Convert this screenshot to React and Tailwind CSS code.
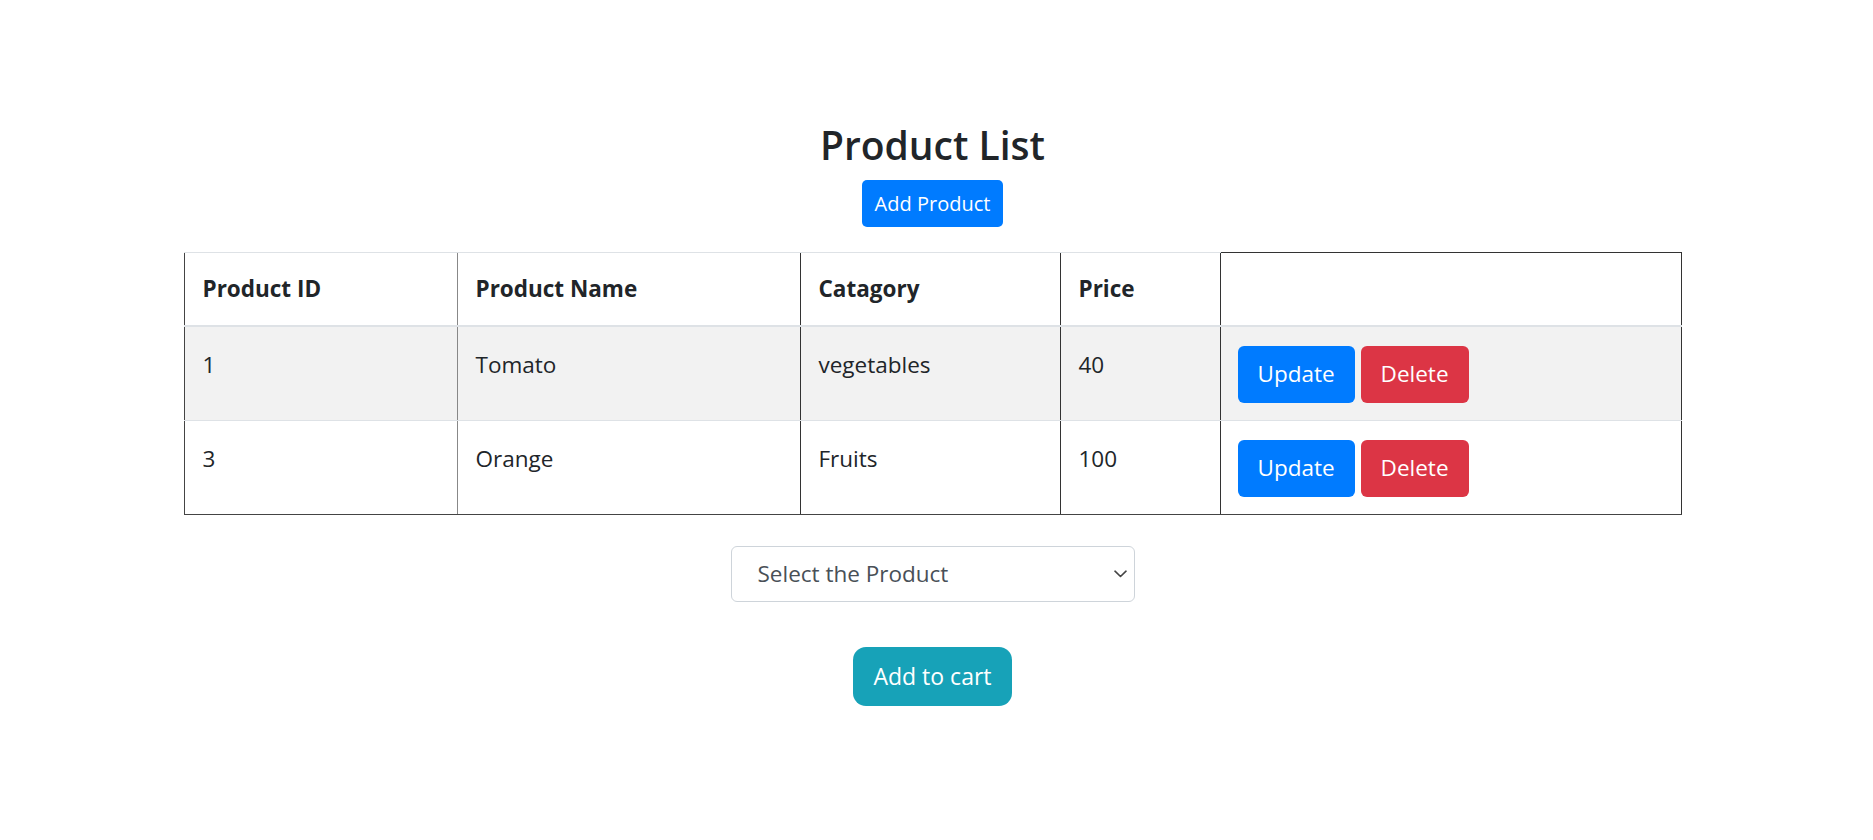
import React from 'react';

const products = [
    { id: 1, name: 'Tomato', category: 'vegetables', price: 40 },
    { id: 3, name: 'Orange', category: 'Fruits', price: 100 },
];

const ProductList = () => {
    return (
        <div className="min-h-screen bg-white text-[#212529] font-['Open_Sans','Liberation_Sans',sans-serif]">
            <div className="w-[1497px] ml-[184px] pt-[121px] flex flex-col items-center">
                <h2 className="text-[39px] leading-[48px] font-semibold">Product List</h2>
                <button className="mt-[11px] h-[47px] px-[13px] rounded-[5px] bg-[#007bff] text-white text-[20px] leading-[30px]">
                    Add Product
                </button>

                <table className="mt-[25px] w-[1497px] table-fixed border-collapse text-[22.5px]">
                    <colgroup>
                        <col className="w-[273px]" />
                        <col className="w-[343px]" />
                        <col className="w-[260px]" />
                        <col className="w-[160px]" />
                        <col className="w-[461px]" />
                    </colgroup>
                    <thead>
                        <tr className="h-[73px] text-left">
                            <th className="pl-[18px] font-bold border-t border-t-[#dee2e6] border-b-2 border-b-[#dee2e6] border-l border-l-[#444]">Product ID</th>
                            <th className="pl-[18px] font-bold border-t border-t-[#dee2e6] border-b-2 border-b-[#dee2e6] border-l border-l-[#888]">Product Name</th>
                            <th className="pl-[18px] font-bold border-t border-t-[#dee2e6] border-b-2 border-b-[#dee2e6] border-l border-l-[#333]">Catagory</th>
                            <th className="pl-[18px] font-bold border-t border-t-[#dee2e6] border-b-2 border-b-[#dee2e6] border-l border-l-[#333]">Price</th>
                            <th className="border-t border-t-[#333] border-b-2 border-b-[#dee2e6] border-l border-l-[#333] border-r border-r-[#333]"></th>
                        </tr>
                    </thead>
                    <tbody>
                        {products.map((p, index) => {
                            const last = index === products.length - 1;
                            const rowBorder = last ? 'border-b border-b-[#444]' : 'border-b border-b-[#dee2e6]';
                            return (
                                <tr key={p.id} className={index % 2 === 0 ? 'bg-[#f2f2f2]' : 'bg-white'}>
                                    <td className={`align-top pl-[18px] pt-[19px] pb-[17px] leading-[38px] border-l border-l-[#444] ${rowBorder}`}>{p.id}</td>
                                    <td className={`align-top pl-[18px] pt-[19px] pb-[17px] leading-[38px] border-l border-l-[#888] ${rowBorder}`}>{p.name}</td>
                                    <td className={`align-top pl-[18px] pt-[19px] pb-[17px] leading-[38px] border-l border-l-[#333] ${rowBorder}`}>{p.category}</td>
                                    <td className={`align-top pl-[18px] pt-[19px] pb-[17px] leading-[38px] border-l border-l-[#333] ${rowBorder}`}>{p.price}</td>
                                    <td className={`align-top pl-[17px] pt-[19px] pb-[17px] border-l border-l-[#333] border-r border-r-[#333] ${rowBorder}`}>
                                        <div className="flex gap-[6px]">
                                            <button className="h-[57px] px-[20px] rounded-[6px] bg-[#007bff] text-white text-[22.5px] leading-[34px]">Update</button>
                                            <button className="h-[57px] px-[20px] rounded-[6px] bg-[#dc3545] text-white text-[22.5px] leading-[34px]">Delete</button>
                                        </div>
                                    </td>
                                </tr>
                            );
                        })}
                    </tbody>
                </table>

                <div className="mt-[31px] w-[404px] h-[56px] border border-[#ced4da] rounded-[6px] flex items-center justify-between pl-[26px] pr-[7px] text-[22.5px] text-[#495057] bg-white">
                    <span>Select the Product</span>
                    <svg width="13" height="8" viewBox="0 0 13 8" fill="none" stroke="#444" strokeWidth="1.6" strokeLinecap="round" strokeLinejoin="round">
                        <path d="M1 1.2l5.5 5.3 5.5-5.3" />
                    </svg>
                </div>

                <button className="mt-[45px] h-[59px] px-[20px] rounded-[13px] bg-[#17a2b8] text-white text-[23px] leading-[34px]">
                    Add to cart
                </button>
            </div>
        </div>
    );
};

export default function App() {
    return <ProductList />;
}
